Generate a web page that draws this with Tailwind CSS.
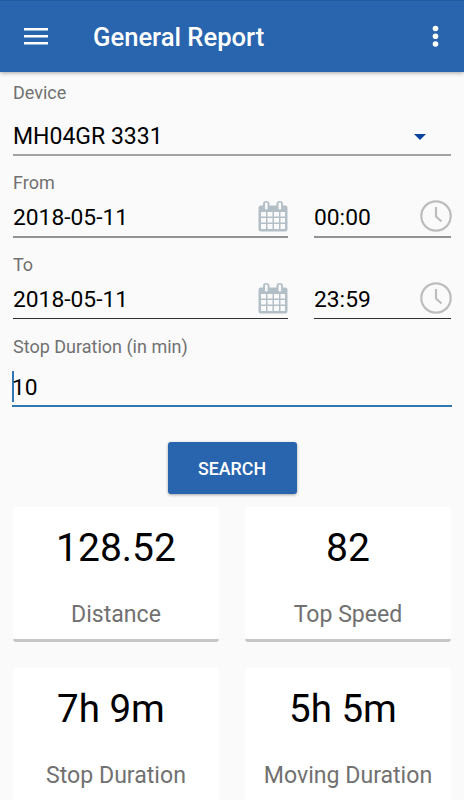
<!DOCTYPE html>
<html lang="en">
<head>
  <meta charset="UTF-8" />
  <title>General Report</title>
  <script src="https://cdn.jsdelivr.net/npm/@tailwindcss/browser@4"></script>
</head>
<body class="bg-[#fafafa] text-black font-['Roboto',sans-serif] h-screen overflow-hidden">
  <!-- Shared icons -->
  <svg class="hidden">
    <symbol id="calendar" viewBox="0 0 30 32">
      <path fill="#b3bfc6" d="M2.500 5.500h25a2 2 0 0 1 2 2V29a2.500 2.500 0 0 1-2.500 2.500H3A2.500 2.500 0 0 1 .5 29V7.500a2 2 0 0 1 2-2z" />
      <rect x="5" y="1" width="6.500" height="9.500" rx="3.200" fill="#b3bfc6" />
      <rect x="18.500" y="1" width="6.500" height="9.500" rx="3.200" fill="#b3bfc6" />
      <rect x="7" y="2.500" width="2.600" height="7" rx="1.300" fill="#fafafa" />
      <rect x="20.500" y="2.500" width="2.600" height="7" rx="1.300" fill="#fafafa" />
      <path fill="#fafafa" d="M3 12h5v4.500H3zM9.500 12h5v4.500h-5zM16 12h5v4.500h-5zM22.500 12h4.500v4.500h-4.500zM3 18h5v4.500H3zM9.500 18h5v4.500h-5zM16 18h5v4.500h-5zM22.500 18h4.500v4.500h-4.500zM3 24h5v5H3zM9.500 24h5v5h-5zM16 24h5v5h-5zM22.500 24h4.500v5h-4.500z" />
    </symbol>
    <symbol id="clock" viewBox="0 0 32 32">
      <circle cx="16" cy="16" r="14.700" fill="none" stroke="#bdbdbd" stroke-width="2.200" />
      <path d="M16 7v9.500l5.500 5" fill="none" stroke="#bdbdbd" stroke-width="2.200" />
    </symbol>
  </svg>

  <header class="relative h-[72px] bg-[#2965ae] border-t border-[#235a9e] shadow-[0_1px_4px_rgba(0,0,0,0.35)] flex items-center text-white">
    <svg class="ml-6 -mt-0.5 w-6 h-[18px]" viewBox="0 0 24 18" fill="#fff">
      <rect y="1" width="24" height="2.500" />
      <rect y="8" width="24" height="2.500" />
      <rect y="15" width="24" height="2.500" />
    </svg>
    <h1 class="ml-[45px] mt-px text-[25.6px] font-medium">General Report</h1>
    <svg class="ml-auto mr-[25px] -mt-px w-[7px] h-[22px]" viewBox="0 0 7 22" fill="#fff">
      <circle cx="3.500" cy="3.500" r="2.800" />
      <circle cx="3.500" cy="11.200" r="2.800" />
      <circle cx="3.500" cy="19" r="2.800" />
    </svg>
  </header>

  <main class="px-[13px] pt-[9px]">
    <!-- Device -->
    <label class="block text-lg/6 text-[#717171]">Device</label>
    <div class="h-[51px] pt-[18px] border-b-2 border-[#a3a3a3] flex justify-between text-[23px]/7">
      <span>MH04GR 3331</span>
      <svg class="mt-[11px] mr-[25px] w-3 h-1.5" viewBox="0 0 12 6" fill="#0d439c"><path d="M0 0h12L6 6z" /></svg>
    </div>

    <!-- From -->
    <label class="block mt-[15px] text-lg/6 text-[#717171]">From</label>
    <div class="flex gap-[26px] text-[22.8px]/7">
      <div class="w-[275px] h-[43px] pt-[9px] border-b-2 border-[#929292] flex justify-between">
        <span>2018-05-11</span>
        <svg class="-mt-1 w-[30px] h-8"><use href="#calendar" /></svg>
      </div>
      <div class="flex-1 h-[43px] pt-[9px] border-b-2 border-[#929292] flex justify-between">
        <span>00:00</span>
        <svg class="-mt-1 -mr-px w-8 h-8"><use href="#clock" /></svg>
      </div>
    </div>

    <!-- To -->
    <label class="block mt-[15px] text-lg/6 text-[#717171]">To</label>
    <div class="flex gap-[26px] text-[22.8px]/7">
      <div class="w-[275px] h-[42px] pt-[9px] border-b border-[#303030] flex justify-between">
        <span>2018-05-11</span>
        <svg class="-mt-1 w-[30px] h-8"><use href="#calendar" /></svg>
      </div>
      <div class="flex-1 h-[42px] pt-[9px] border-b border-[#303030] flex justify-between">
        <span>23:59</span>
        <svg class="-mt-1 -mr-px w-8 h-8"><use href="#clock" /></svg>
      </div>
    </div>

    <!-- Stop duration, focused -->
    <label class="block mt-4 text-lg/6 text-[#717171]">Stop Duration (in min)</label>
    <div class="relative -mx-px h-12 pt-[15px] border-b-2 border-[#2f78ad] text-[22.8px]/7">
      <span class="absolute left-0 top-3 w-0.5 h-[31px] bg-[#2f78b5]"></span>
      <span class="relative">10</span>
    </div>

    <button class="block mx-auto mt-[35px] w-[129px] h-[52px] pt-0.5 rounded-[3px] bg-[#2965ae] text-white text-[17.8px] font-medium shadow-[0_1px_3px_rgba(0,0,0,0.35)]">SEARCH</button>

    <div class="mt-[13px] grid grid-cols-2 gap-[26px] text-center">
      <div class="h-[135px] pt-[17px] rounded-[3px] bg-white border-b-3 border-[#c6c6c6]">
        <p class="text-[39px]/12">128.52</p>
        <p class="mt-[27px] text-[23.1px]/8 text-[#717171]">Distance</p>
      </div>
      <div class="h-[135px] pt-[17px] rounded-[3px] bg-white border-b-3 border-[#c6c6c6]">
        <p class="text-[39px]/12">82</p>
        <p class="mt-[27px] text-[23.1px]/8 text-[#717171]">Top Speed</p>
      </div>
      <div class="h-[135px] pt-[17px] rounded-[3px] bg-white border-b-3 border-[#c6c6c6]">
        <p class="pr-2.5 text-[38.5px]/12">7h 9m</p>
        <p class="mt-[27px] text-[23.1px]/8 text-[#717171]">Stop Duration</p>
      </div>
      <div class="h-[135px] pt-[17px] rounded-[3px] bg-white border-b-3 border-[#c6c6c6]">
        <p class="pr-2.5 text-[38.5px]/12">5h 5m</p>
        <p class="mt-[27px] text-[23.1px]/8 text-[#717171]">Moving Duration</p>
      </div>
    </div>
  </main>
</body>
</html>
